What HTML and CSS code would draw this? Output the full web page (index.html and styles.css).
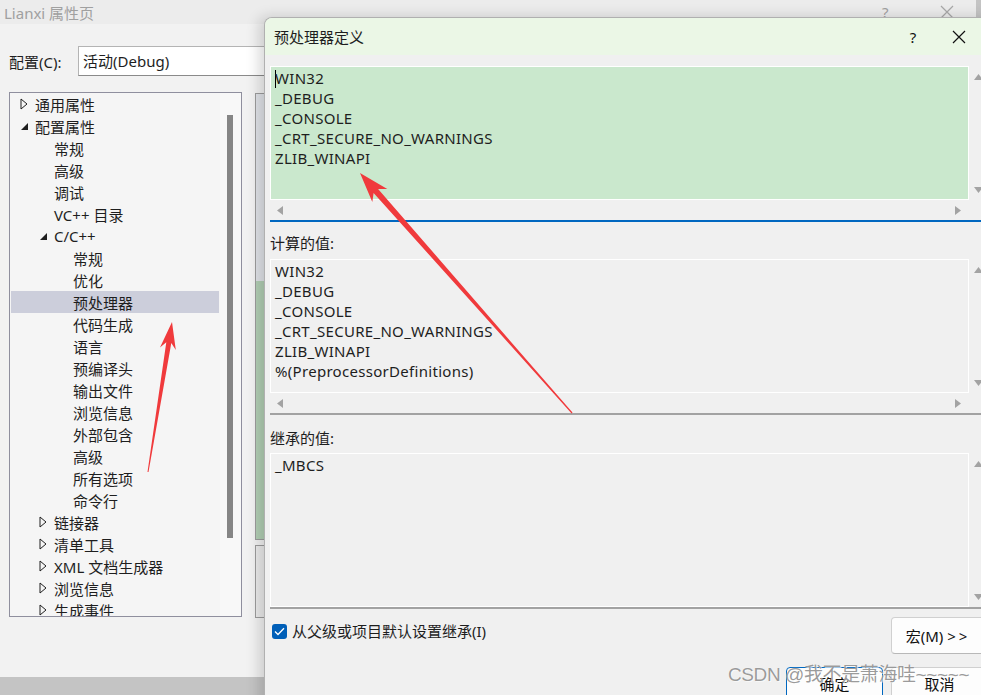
FILE: index.html
```html
<!DOCTYPE html>
<html lang="zh-CN">
<head>
    <meta charset="UTF-8">
    <title>Lianxi 属性页</title>
    <link rel="stylesheet" href="styles.css">
</head>
<body>
<div class="desk">
    <div class="propwin">
        <div class="propwin-title">
            <span class="propwin-name">Lianxi 属性页</span>
            <span class="pw-help">?</span>
            <svg class="pw-close" width="14" height="14" viewBox="0 0 14 14"><path d="M1 1L13 13M13 1L1 13" stroke="#a8a8a8" stroke-width="1.2"/></svg>
        </div>
        <div class="config-row">
            <span class="config-label">配置(C):</span>
            <div class="combo">活动(Debug)</div>
        </div>
        <div class="propwin-main">
            <div class="tree">
                <ul class="tree-list">
                    <li class="node lv0"><span class="tw"><svg width="8" height="12" viewBox="0 0 8 12"><polygon points="1,1 7,6 1,11" fill="none" stroke="#1e1e1e"/></svg></span>通用属性</li>
                    <li class="node lv0"><span class="tw"><svg width="9" height="9" viewBox="0 0 9 9"><polygon points="8,1 8,8 1,8" fill="#1e1e1e"/></svg></span>配置属性</li>
                    <li class="node lv1"><span class="tw"></span>常规</li>
                    <li class="node lv1"><span class="tw"></span>高级</li>
                    <li class="node lv1"><span class="tw"></span>调试</li>
                    <li class="node lv1"><span class="tw"></span>VC++ 目录</li>
                    <li class="node lv1"><span class="tw"><svg width="9" height="9" viewBox="0 0 9 9"><polygon points="8,1 8,8 1,8" fill="#1e1e1e"/></svg></span>C/C++</li>
                    <li class="node lv2"><span class="tw"></span>常规</li>
                    <li class="node lv2"><span class="tw"></span>优化</li>
                    <li class="node lv2 selected"><span class="tw"></span>预处理器</li>
                    <li class="node lv2"><span class="tw"></span>代码生成</li>
                    <li class="node lv2"><span class="tw"></span>语言</li>
                    <li class="node lv2"><span class="tw"></span>预编译头</li>
                    <li class="node lv2"><span class="tw"></span>输出文件</li>
                    <li class="node lv2"><span class="tw"></span>浏览信息</li>
                    <li class="node lv2"><span class="tw"></span>外部包含</li>
                    <li class="node lv2"><span class="tw"></span>高级</li>
                    <li class="node lv2"><span class="tw"></span>所有选项</li>
                    <li class="node lv2"><span class="tw"></span>命令行</li>
                    <li class="node lv1"><span class="tw"><svg width="8" height="12" viewBox="0 0 8 12"><polygon points="1,1 7,6 1,11" fill="none" stroke="#1e1e1e"/></svg></span>链接器</li>
                    <li class="node lv1"><span class="tw"><svg width="8" height="12" viewBox="0 0 8 12"><polygon points="1,1 7,6 1,11" fill="none" stroke="#1e1e1e"/></svg></span>清单工具</li>
                    <li class="node lv1"><span class="tw"><svg width="8" height="12" viewBox="0 0 8 12"><polygon points="1,1 7,6 1,11" fill="none" stroke="#1e1e1e"/></svg></span>XML 文档生成器</li>
                    <li class="node lv1"><span class="tw"><svg width="8" height="12" viewBox="0 0 8 12"><polygon points="1,1 7,6 1,11" fill="none" stroke="#1e1e1e"/></svg></span>浏览信息</li>
                    <li class="node lv1"><span class="tw"><svg width="8" height="12" viewBox="0 0 8 12"><polygon points="1,1 7,6 1,11" fill="none" stroke="#1e1e1e"/></svg></span>生成事件</li>
                </ul>
                <div class="tree-scroll"><div class="thumb"></div></div>
            </div>
            <div class="grid-panel">
                <div class="grid-top"><div class="grid-green"></div></div>
                <div class="grid-bottom"></div>
            </div>
        </div>
    </div>

    <div class="dialog">
        <div class="dlg-title">
            <span class="dlg-name">预处理器定义</span>
            <span class="dlg-help">?</span>
            <span class="dlg-close"><svg width="14" height="14" viewBox="0 0 14 14"><path d="M1 1L13 13M13 1L1 13" stroke="#111" stroke-width="1.2"/></svg></span>
        </div>
        <div class="dlg-body">
            <div class="editor editor-main">
                <div class="ed-text green"><span class="caret"></span>WIN32<br>_DEBUG<br>_CONSOLE<br>_CRT_SECURE_NO_WARNINGS<br>ZLIB_WINAPI</div>
                <div class="vscroll">
                    <svg width="9" height="6" viewBox="0 0 9 6"><polygon points="0,6 4.5,0 9,6" fill="#a3a3a3"/></svg>
                    <svg width="9" height="6" viewBox="0 0 9 6"><polygon points="0,0 9,0 4.5,6" fill="#a3a3a3"/></svg>
                </div>
                <div class="hscroll">
                    <svg width="6" height="9" viewBox="0 0 6 9"><polygon points="6,0 6,9 0,4.5" fill="#a3a3a3"/></svg>
                    <svg width="6" height="9" viewBox="0 0 6 9"><polygon points="0,0 0,9 6,4.5" fill="#a3a3a3"/></svg>
                </div>
            </div>

            <div class="field-label first">计算的值:</div>
            <div class="editor editor-calc">
                <div class="ed-text">WIN32<br>_DEBUG<br>_CONSOLE<br>_CRT_SECURE_NO_WARNINGS<br>ZLIB_WINAPI<br>%(PreprocessorDefinitions)</div>
                <div class="vscroll">
                    <svg width="9" height="6" viewBox="0 0 9 6"><polygon points="0,6 4.5,0 9,6" fill="#a3a3a3"/></svg>
                    <svg width="9" height="6" viewBox="0 0 9 6"><polygon points="0,0 9,0 4.5,6" fill="#a3a3a3"/></svg>
                </div>
                <div class="hscroll">
                    <svg width="6" height="9" viewBox="0 0 6 9"><polygon points="6,0 6,9 0,4.5" fill="#a3a3a3"/></svg>
                    <svg width="6" height="9" viewBox="0 0 6 9"><polygon points="0,0 0,9 6,4.5" fill="#a3a3a3"/></svg>
                </div>
            </div>

            <div class="field-label second">继承的值:</div>
            <div class="editor editor-inh">
                <div class="ed-text">_MBCS</div>
                <div class="vscroll">
                    <svg width="9" height="6" viewBox="0 0 9 6"><polygon points="0,6 4.5,0 9,6" fill="#a3a3a3"/></svg>
                    <svg width="9" height="6" viewBox="0 0 9 6"><polygon points="0,0 9,0 4.5,6" fill="#a3a3a3"/></svg>
                </div>
            </div>

            <div class="option-row">
                <label class="check">
                    <span class="check-box"><svg width="11" height="9" viewBox="0 0 11 9"><path d="M1 4.5L4 7.5L10 1.2" fill="none" stroke="#fff" stroke-width="1.3"/></svg></span>
                    从父级或项目默认设置继承(I)
                </label>
                <button class="btn btn-macro">宏(M) <span class="gt">&gt;&gt;</span></button>
            </div>

            <div class="action-row">
                <button class="btn btn-ok">确定</button>
                <button class="btn">取消</button>
            </div>
        </div>
    </div>

    <svg class="marks" width="981" height="695" viewBox="0 0 981 695">
        <polygon points="148.5,472.1 171.3,343.1 175.8,350 172,322 160,347.4 166.3,342.3 147.5,471.9" fill="#f03a3c"/>
        <polygon points="572.5,412.6 378.1,189 387.3,188.9 360,173 372.3,202.1 373.6,193 571.6,413.4" fill="#f03a3c"/>
    </svg>

    <div class="watermark">CSDN @我不是萧海哇~~~~~</div>
</div>
</body>
</html>
```

FILE: styles.css
```css
* {
    box-sizing: border-box;
}
body {
    margin: 0;
    font-family: "Noto Sans", "Noto Sans CJK SC", sans-serif;
    font-size: 15px;
    color: #1e1e1e;
}
.desk {
    position: relative;
    width: 981px;
    height: 695px;
    overflow: hidden;
    background: #c4c4c4;
}

/* property page window behind */
.propwin {
    position: absolute;
    left: 0;
    top: 0;
    width: 976px;
    height: 677px;
    background: #f2f2f2;
}
.propwin-title {
    display: flex;
    align-items: center;
    height: 24px;
    padding-left: 4px;
    background: #ececec;
    color: #a0a0a0;
}
.propwin-name {
    flex: 1;
}
.pw-help {
    width: 58px;
    font-size: 15px;
}
.pw-close {
    margin-right: 22px;
}
.config-row {
    display: flex;
    align-items: center;
    height: 30px;
    margin-top: 22px;
    padding-left: 9px;
}
.config-label {
    width: 69px;
}
.combo {
    width: 260px;
    height: 30px;
    line-height: 28px;
    padding-left: 4px;
    background: #fff;
    border: 1px solid #b4b4b4;
    border-bottom-color: #8a8a8a;
}
.propwin-main {
    display: flex;
    align-items: flex-start;
    margin-top: 16px;
    padding-left: 9px;
}

.tree {
    display: flex;
    width: 233px;
    height: 525px;
    border: 1px solid #8f8f9e;
    background: #f5f5f5;
}
.tree-list {
    list-style: none;
    margin: 0 0 0 1px;
    padding: 0;
    width: 208px;
    overflow: hidden;
}
.node {
    display: flex;
    align-items: center;
    height: 22px;
    white-space: nowrap;
}
.node.selected {
    background: #cccedb;
}
.tw {
    display: flex;
    align-items: center;
    width: 16px;
    height: 22px;
    padding-left: 1px;
}
.lv0 .tw { margin-left: 8px; }
.lv1 .tw { margin-left: 27px; }
.lv2 .tw { margin-left: 46px; }
.tree-scroll {
    width: 21px;
    margin-left: 1px;
    background: #f8f8f8;
    padding: 22px 0 0 7px;
}
.thumb {
    width: 6px;
    height: 423px;
    background: #868686;
}

.grid-panel {
    margin-left: 13px;
    margin-top: 1px;
    width: 300px;
}
.grid-top {
    height: 447px;
    padding-top: 187px;
    border: 1px solid #9c9c9c;
    background: #e0e3e8;
}
.grid-green {
    height: 258px;
    background: #b2cfb4;
}
.grid-bottom {
    height: 73px;
    margin-top: 5px;
    border: 1px solid #9c9c9c;
    background: #ebebeb;
}

/* dialog in front */
.dialog {
    position: absolute;
    left: 264px;
    top: 17px;
    width: 730px;
    height: 700px;
    background: #f0f0f0;
    border-left: 1px solid #b0b0b0;
    border-top: 1px solid #b0b0b0;
    border-top-left-radius: 8px;
    box-shadow: -5px 0 14px rgba(0, 0, 0, 0.16);
    overflow: hidden;
}
.dlg-title {
    display: flex;
    align-items: center;
    height: 37px;
    padding-left: 9px;
    background: #ebf7e6;
}
.dlg-name {
    flex: 1;
}
.dlg-help {
    width: 46px;
    text-align: center;
    color: #111;
}
.dlg-close {
    display: flex;
    justify-content: center;
    width: 46px;
    margin-right: 12px;
}
.dlg-body {
    padding: 11px 0 0 5px;
}

.editor {
    display: grid;
    grid-template-columns: 699px 18px;
    width: 717px;
}
.ed-text {
    padding: 1px 4px;
    line-height: 20px;
    letter-spacing: 0.3px;
    border: 1px solid #fff;
    white-space: nowrap;
}
.ed-text.green {
    background: #cae8cd;
}
.caret {
    display: inline-block;
    width: 1px;
    height: 18px;
    margin-right: -1px;
    vertical-align: -4px;
    background: #000;
}
.vscroll {
    display: flex;
    flex-direction: column;
    justify-content: space-between;
    align-items: center;
    padding: 8px 0 7px;
}
.hscroll {
    display: flex;
    justify-content: space-between;
    align-items: center;
    padding: 0 8px 0 7px;
}
.editor-main {
    grid-template-rows: 134px 20px;
    border-bottom: 2px solid #0067c0;
}
.editor-calc {
    grid-template-rows: 134px 20px;
    border-bottom: 2px solid #a2a2a2;
}
.editor-inh {
    grid-template-rows: 154px;
    border-bottom: 2px solid #a2a2a2;
}
.field-label {
    height: 20px;
    line-height: 20px;
}
.field-label.first {
    margin: 11px 0 6px;
}
.field-label.second {
    margin: 13px 0 5px;
}

.option-row {
    display: flex;
    align-items: flex-start;
    height: 37px;
    margin-top: 8px;
}
.check {
    display: flex;
    align-items: center;
    margin-top: 6px;
    margin-left: 2px;
    line-height: 16px;
}
.check-box {
    display: flex;
    justify-content: center;
    align-items: center;
    width: 15px;
    height: 15px;
    margin-right: 5px;
    border-radius: 3px;
    background: #005fb8;
}
.btn {
    height: 37px;
    width: 94px;
    font-family: inherit;
    font-size: 15px;
    color: #111;
    background: #fdfdfd;
    border: 1px solid #d0d0d0;
    border-bottom-color: #b8b8b8;
    border-radius: 4px;
    padding: 0;
}
.btn-macro {
    margin-left: auto;
    margin-right: 9px;
}
.gt {
    letter-spacing: 3px;
}
.action-row {
    display: flex;
    justify-content: flex-end;
    gap: 8px;
    margin-top: 13px;
    padding-right: 6px;
}
.action-row .btn {
    width: 97px;
    height: 32px;
}
.btn-ok {
    border: 1px solid #0067c0;
}

/* annotations */
.marks {
    position: absolute;
    left: 0;
    top: 0;
    pointer-events: none;
}
.watermark {
    position: absolute;
    left: 728px;
    top: 663px;
    font-family: "Liberation Sans", "Noto Sans CJK SC", sans-serif;
    font-size: 19px;
    line-height: 24px;
    letter-spacing: -0.4px;
    color: rgba(110, 110, 110, 0.7);
    text-shadow: 0 0 1px #fff, 1px 1px 0 rgba(255, 255, 255, 0.6);
    white-space: nowrap;
}
```
